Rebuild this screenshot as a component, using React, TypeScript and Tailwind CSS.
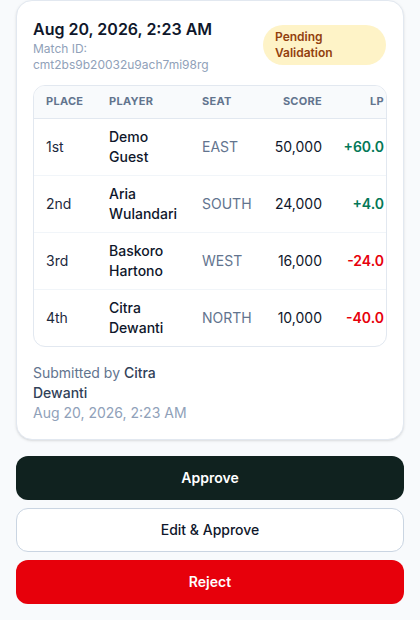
const rows = [
  { place: "1st", name: "Demo Guest", seat: "EAST", score: "50,000", lp: "+60.0", up: true },
  { place: "2nd", name: "Aria Wulandari", seat: "SOUTH", score: "24,000", lp: "+4.0", up: true },
  { place: "3rd", name: "Baskoro Hartono", seat: "WEST", score: "16,000", lp: "-24.0", up: false },
  { place: "4th", name: "Citra Dewanti", seat: "NORTH", score: "10,000", lp: "-40.0", up: false },
]

export default function App() {
  return (
    <div className="min-h-[620px] bg-[#f8fafc] px-4 pb-4 font-['Inter',sans-serif]">
      <div className="rounded-2xl border border-slate-200 bg-white p-4 shadow-sm">
        <div className="flex items-center justify-between gap-3">
          <div>
            <h1 className="text-base font-semibold text-slate-900">Aug 20, 2026, 2:23 AM</h1>
            <p className="text-xs text-slate-400">
              Match ID:
              <br />
              cmt2bs9b20032u9ach7mi98rg
            </p>
          </div>
          <span className="mr-px w-[123px] rounded-full bg-[#fef3c7] px-3 py-1 text-xs font-semibold leading-4 text-[#92400e]">
            Pending Validation
          </span>
        </div>

        <div className="mt-3 overflow-hidden rounded-xl border border-slate-200">
          <table className="w-[362px] table-fixed text-left text-sm">
            <thead className="bg-slate-50 text-[11px] font-bold uppercase tracking-wide text-slate-500">
              <tr className="border-b border-slate-200">
                <th className="w-[63px] py-2 pl-3">Place</th>
                <th className="w-[93px] py-2 pl-3">Player</th>
                <th className="w-[78px] py-2 pl-3">Seat</th>
                <th className="w-[66px] py-2 pr-3 text-right">Score</th>
                <th className="w-[62px] py-2 pr-3 text-right">LP</th>
              </tr>
            </thead>
            <tbody>
              {rows.map((r, i) => (
                <tr key={r.place} className={i < rows.length - 1 ? "border-b border-slate-100" : ""}>
                  <td className="py-2 pl-3 text-slate-800">{r.place}</td>
                  <td className="py-2 pl-3 font-medium text-slate-900">{r.name}</td>
                  <td className="py-2 pl-3 text-slate-500">{r.seat}</td>
                  <td className="py-2 pr-3 text-right text-slate-900">{r.score}</td>
                  <td className={`py-2 pr-3 text-right font-semibold ${r.up ? "text-[#047857]" : "text-[#e7000b]"}`}>
                    {r.lp}
                  </td>
                </tr>
              ))}
            </tbody>
          </table>
        </div>

        <div className="mt-4 text-sm">
          <p className="w-[160px] text-slate-500">
            Submitted by <span className="font-medium text-slate-700">Citra</span>
            <br />
            <span className="font-medium text-slate-700">Dewanti</span>
          </p>
          <p className="text-slate-400">Aug 20, 2026, 2:23 AM</p>
        </div>
      </div>

      <div className="mt-4 flex flex-col gap-2">
        <button className="h-11 rounded-xl bg-[#10221f] text-sm font-semibold text-white">Approve</button>
        <button className="h-11 rounded-xl border border-slate-300 bg-white text-sm font-medium text-slate-900">
          Edit &amp; Approve
        </button>
        <button className="h-11 rounded-xl bg-[#e7000b] text-sm font-semibold text-white">Reject</button>
      </div>
    </div>
  )
}
